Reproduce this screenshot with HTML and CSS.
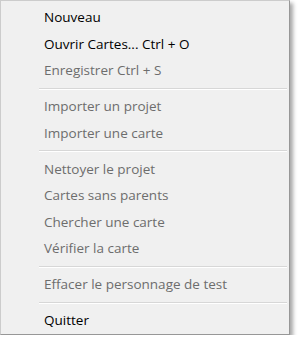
FILE: index.html
```html
<!DOCTYPE html>
<html lang="fr">
<head>
    <meta charset="UTF-8">
    <meta name="viewport" content="width=device-width, initial-scale=1.0">
    <title>Menu Fichier</title>
    <link rel="stylesheet" href="styles.css">
</head>
<body>
    <div class="menu">
        <ul class="menu-list">
            <li class="item">Nouveau</li>
            <li class="item">Ouvrir Cartes... Ctrl + O</li>
            <li class="item disabled">Enregistrer Ctrl + S</li>
            <li class="separator"></li>
            <li class="item disabled">Importer un projet</li>
            <li class="item disabled">Importer une carte</li>
            <li class="separator"></li>
            <li class="item disabled">Nettoyer le projet</li>
            <li class="item disabled">Cartes sans parents</li>
            <li class="item disabled">Chercher une carte</li>
            <li class="item disabled">Vérifier la carte</li>
            <li class="separator"></li>
            <li class="item disabled">Effacer le personnage de test</li>
            <li class="separator"></li>
            <li class="item">Quitter</li>
        </ul>
    </div>
</body>
</html>
```

FILE: styles.css
```css
body {
    margin: 0;
    padding: 0;
    background-color: #ffffff;
    font-family: "Open Sans", "Noto Sans", sans-serif;
}

.menu {
    width: 288px;
    height: 333px;
    background-color: #f0f0f0;
    border: 1px solid #979797;
    border-left-color: #cccccc;
    border-top-color: #cccccc;
    box-shadow: 3px 3px 4px rgba(0, 0, 0, 0.35);
    box-sizing: content-box;
}

.menu-list {
    list-style: none;
    margin: 0;
    padding: 3px 2px 0 2px;
}

.item {
    height: 26.5px;
    line-height: 26px;
    padding-left: 41px;
    font-size: 13.5px;
    color: #000000;
    white-space: nowrap;
}

.disabled {
    color: #6d6d6d;
}

.separator {
    height: 1px;
    margin: 4px 0 3.5px 36px;
    background-color: #d7d7d7;
    border-bottom: 1px solid #ffffff;
}
```
